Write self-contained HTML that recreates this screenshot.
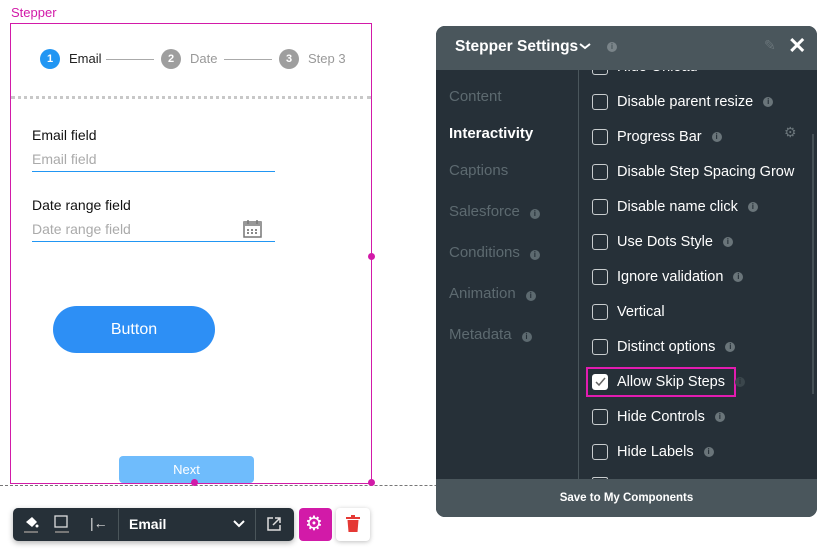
<!DOCTYPE html>
<html><head><style>
*{margin:0;padding:0;box-sizing:border-box}
body{width:817px;height:549px;background:#fff;position:relative;overflow:hidden;font-family:"Liberation Sans",sans-serif}
.a{position:absolute}
.lbl{color:#d21aa8;font-size:13px}
.circ{position:absolute;width:20px;height:20px;border-radius:50%;color:#fff;font-size:11px;font-weight:bold;text-align:center;line-height:20px}
.st{position:absolute;font-size:13px}
.nav{position:absolute;left:449px;font-size:15px;color:#5d6a70}
.row{position:absolute;left:592px;height:18px;font-size:14.5px;color:#fff;display:flex;align-items:center}
.cb{width:16px;height:16px;border:1.5px solid #c8ccce;border-radius:3px;margin-right:9px}
.i{display:inline-block;width:10px;height:10px;border-radius:50%;background:#6a757a;color:#263038;font-size:8px;font-weight:bold;text-align:center;line-height:10px;margin-left:10px}
.nav .i{background:#5d6a70}
</style></head><body>
<div class="a lbl" style="left:11px;top:5px">Stepper</div>
<div class="a" style="left:10px;top:23px;width:362px;height:461px;border:1px solid #d21aa8"></div>
<div class="circ" style="left:40px;top:49px;background:#2196f3">1</div>
<div class="st" style="left:69px;top:51px;color:#222">Email</div>
<div class="a" style="left:106px;top:59px;width:48px;height:1px;background:#aaa"></div>
<div class="circ" style="left:161px;top:49px;background:#9e9e9e">2</div>
<div class="st" style="left:190px;top:51px;color:#999">Date</div>
<div class="a" style="left:224px;top:59px;width:48px;height:1px;background:#aaa"></div>
<div class="circ" style="left:279px;top:49px;background:#9e9e9e">3</div>
<div class="st" style="left:308px;top:51px;color:#999">Step 3</div>
<div class="a" style="left:11px;top:96px;width:360px;border-top:3px dotted #c8c8c8"></div>
<div class="a" style="left:32px;top:127px;font-size:14px;color:#111">Email field</div>
<div class="a" style="left:32px;top:151px;font-size:14px;color:#aaa">Email field</div>
<div class="a" style="left:32px;top:171px;width:243px;height:1px;background:#2196f3"></div>
<div class="a" style="left:32px;top:197px;font-size:14px;color:#111">Date range field</div>
<div class="a" style="left:32px;top:221px;font-size:14px;color:#aaa">Date range field</div>
<svg class="a" style="left:242px;top:218px" width="22" height="22" viewBox="0 0 22 22"><rect x="2" y="4" width="17" height="15" fill="#fff" stroke="#777" stroke-width="1.5"/><rect x="2" y="4" width="17" height="4" fill="#999"/><line x1="6" y1="2" x2="6" y2="6" stroke="#777" stroke-width="1.5"/><line x1="15" y1="2" x2="15" y2="6" stroke="#777" stroke-width="1.5"/><g fill="#888"><rect x="5" y="11" width="2" height="2"/><rect x="9" y="11" width="2" height="2"/><rect x="13" y="11" width="2" height="2"/><rect x="5" y="14" width="2" height="2"/><rect x="9" y="14" width="2" height="2"/><rect x="13" y="14" width="2" height="2"/></g></svg>
<div class="a" style="left:32px;top:241px;width:243px;height:1px;background:#2196f3"></div>
<div class="a" style="left:53px;top:306px;width:162px;height:47px;border-radius:24px;background:#2d8ff5;color:#fff;font-size:16px;text-align:center;line-height:47px">Button</div>
<div class="a" style="left:119px;top:456px;width:135px;height:27px;border-radius:4px;background:#6fbcfc;color:#fff;font-size:13px;text-align:center;line-height:27px">Next</div>
<div class="a" style="left:0;top:485px;width:817px;border-top:1px dashed #777"></div>
<div class="a" style="left:368px;top:253px;width:7px;height:7px;border-radius:50%;background:#d21aa8"></div>
<div class="a" style="left:368px;top:479px;width:7px;height:7px;border-radius:50%;background:#d21aa8"></div>
<div class="a" style="left:191px;top:479px;width:7px;height:7px;border-radius:50%;background:#d21aa8"></div>
<div class="a" style="left:13px;top:508px;width:281px;height:33px;border-radius:5px;background:#263038;box-shadow:0 2px 6px rgba(0,0,0,.3)"></div>
<svg class="a" style="left:22px;top:514px" width="18" height="20"><path d="M4 8l6-5 5 5-5 5z" fill="#fff"/><circle cx="15" cy="12" r="1.5" fill="#fff"/><rect x="2" y="17" width="14" height="2" fill="#777"/></svg>
<svg class="a" style="left:53px;top:514px" width="18" height="20"><rect x="2" y="2" width="12" height="11" fill="none" stroke="#ddd" stroke-width="1.3"/><rect x="2" y="17" width="14" height="2" fill="#777"/></svg>
<div class="a" style="left:90px;top:515px;color:#ddd;font-size:14px">|←</div>
<div class="a" style="left:118px;top:509px;width:1px;height:31px;background:#4a555a"></div>
<div class="a" style="left:129px;top:516px;color:#fff;font-size:14px;font-weight:bold">Email</div>
<svg class="a" style="left:233px;top:519px" width="12" height="10"><path d="M1 2l5 5 5-5" stroke="#fff" stroke-width="2" fill="none"/></svg>
<div class="a" style="left:255px;top:509px;width:1px;height:31px;background:#4a555a"></div>
<svg class="a" style="left:266px;top:516px" width="16" height="16"><path d="M7 2H2v12h12V9" stroke="#ddd" stroke-width="1.5" fill="none"/><path d="M9 2h5v5M14 2L7 9" stroke="#ddd" stroke-width="1.5" fill="none"/></svg>
<div class="a" style="left:299px;top:508px;width:33px;height:33px;border-radius:4px;background:#d21aa8"></div>
<div class="a" style="left:305px;top:511px;color:#fff;font-size:20px">⚙</div>
<div class="a" style="left:336px;top:508px;width:34px;height:33px;border-radius:4px;background:#fff;box-shadow:0 1px 5px rgba(0,0,0,.25)"></div>
<svg class="a" style="left:346px;top:515px" width="14" height="18"><rect x="0" y="2" width="14" height="2" fill="#e53935"/><rect x="5" y="0" width="4" height="2" fill="#e53935"/><path d="M1.5 5h11l-1 12h-9z" fill="#e53935"/></svg>
<div class="a" style="left:436px;top:26px;width:381px;height:491px;border-radius:9px;background:#263038;overflow:hidden">
<div class="a" style="left:0;top:0;width:381px;height:44px;background:#4a565c"></div>
<div class="a" style="left:0;top:453px;width:381px;height:38px;background:#4a565c;color:#fff;font-size:11.5px;font-weight:bold;text-align:center;line-height:38px">Save to My Components</div>
<div class="a" style="left:142px;top:44px;width:1px;height:409px;background:#4a565c"></div>
<div class="a" style="left:376px;top:108px;width:2px;height:260px;background:#444f55"></div>
</div>
<div class="a" style="left:455px;top:38px;color:#fff;font-size:15.5px;font-weight:bold">Stepper Settings</div>
<svg class="a" style="left:579px;top:42px" width="12" height="10"><path d="M1 2l5 4 5-4" stroke="#fff" stroke-width="2" fill="none"/></svg>
<div class="a i" style="left:597px;top:42px;background:#7a8489;color:#4a565c">i</div>
<div class="a" style="left:764px;top:37px;color:#6a757a;font-size:14px">✎</div>
<div class="a" style="left:788px;top:33px;color:#fff;font-size:22px;font-weight:bold">✕</div>
<div class="nav" style="top:88px">Content</div>
<div class="nav" style="top:125px;color:#fff;font-weight:bold">Interactivity</div>
<div class="nav" style="top:162px">Captions</div>
<div class="nav" style="top:203px">Salesforce<span class="i">i</span></div>
<div class="nav" style="top:244px">Conditions<span class="i">i</span></div>
<div class="nav" style="top:285px">Animation<span class="i">i</span></div>
<div class="nav" style="top:326px">Metadata<span class="i">i</span></div>
<div class="a" style="left:592px;top:70px;width:16px;height:5px;border:1.5px solid #c8ccce;border-top:none;border-radius:0 0 3px 3px"></div>
<div class="a" style="left:617px;top:70px;width:90px;height:5px;overflow:hidden"><div style="margin-top:-11px;color:#fff;font-size:14.5px">Hide Onload</div></div>
<div class="row" style="top:93px"><div class="cb"></div>Disable parent resize<span class="i">i</span></div>
<div class="row" style="top:128px"><div class="cb"></div>Progress Bar<span class="i">i</span></div>
<div class="a" style="left:784px;top:124px;color:#6a757a;font-size:14px">⚙</div>
<div class="row" style="top:163px"><div class="cb"></div>Disable Step Spacing Grow</div>
<div class="row" style="top:198px"><div class="cb"></div>Disable name click<span class="i">i</span></div>
<div class="row" style="top:233px"><div class="cb"></div>Use Dots Style<span class="i">i</span></div>
<div class="row" style="top:268px"><div class="cb"></div>Ignore validation<span class="i">i</span></div>
<div class="row" style="top:303px"><div class="cb"></div>Vertical</div>
<div class="row" style="top:338px"><div class="cb"></div>Distinct options<span class="i">i</span></div>
<div class="a" style="left:586px;top:367px;width:150px;height:30px;border:2px solid #e21cb0"></div>
<div class="row" style="top:373px"><div class="cb" style="background:#fff;border-color:#fff;position:relative"><svg style="position:absolute;left:1px;top:1px" width="12" height="12"><path d="M2 6l3 3 6-7" stroke="#666" stroke-width="1.5" fill="none"/></svg></div>Allow Skip Steps<span class="i" style="background:#3b464c">i</span></div>
<div class="row" style="top:408px"><div class="cb"></div>Hide Controls<span class="i">i</span></div>
<div class="row" style="top:443px"><div class="cb"></div>Hide Labels<span class="i">i</span></div>
<div class="a" style="left:592px;top:477px;width:16px;height:2px;border:1.5px solid #c8ccce;border-bottom:none;border-radius:3px 3px 0 0"></div>
</body></html>
